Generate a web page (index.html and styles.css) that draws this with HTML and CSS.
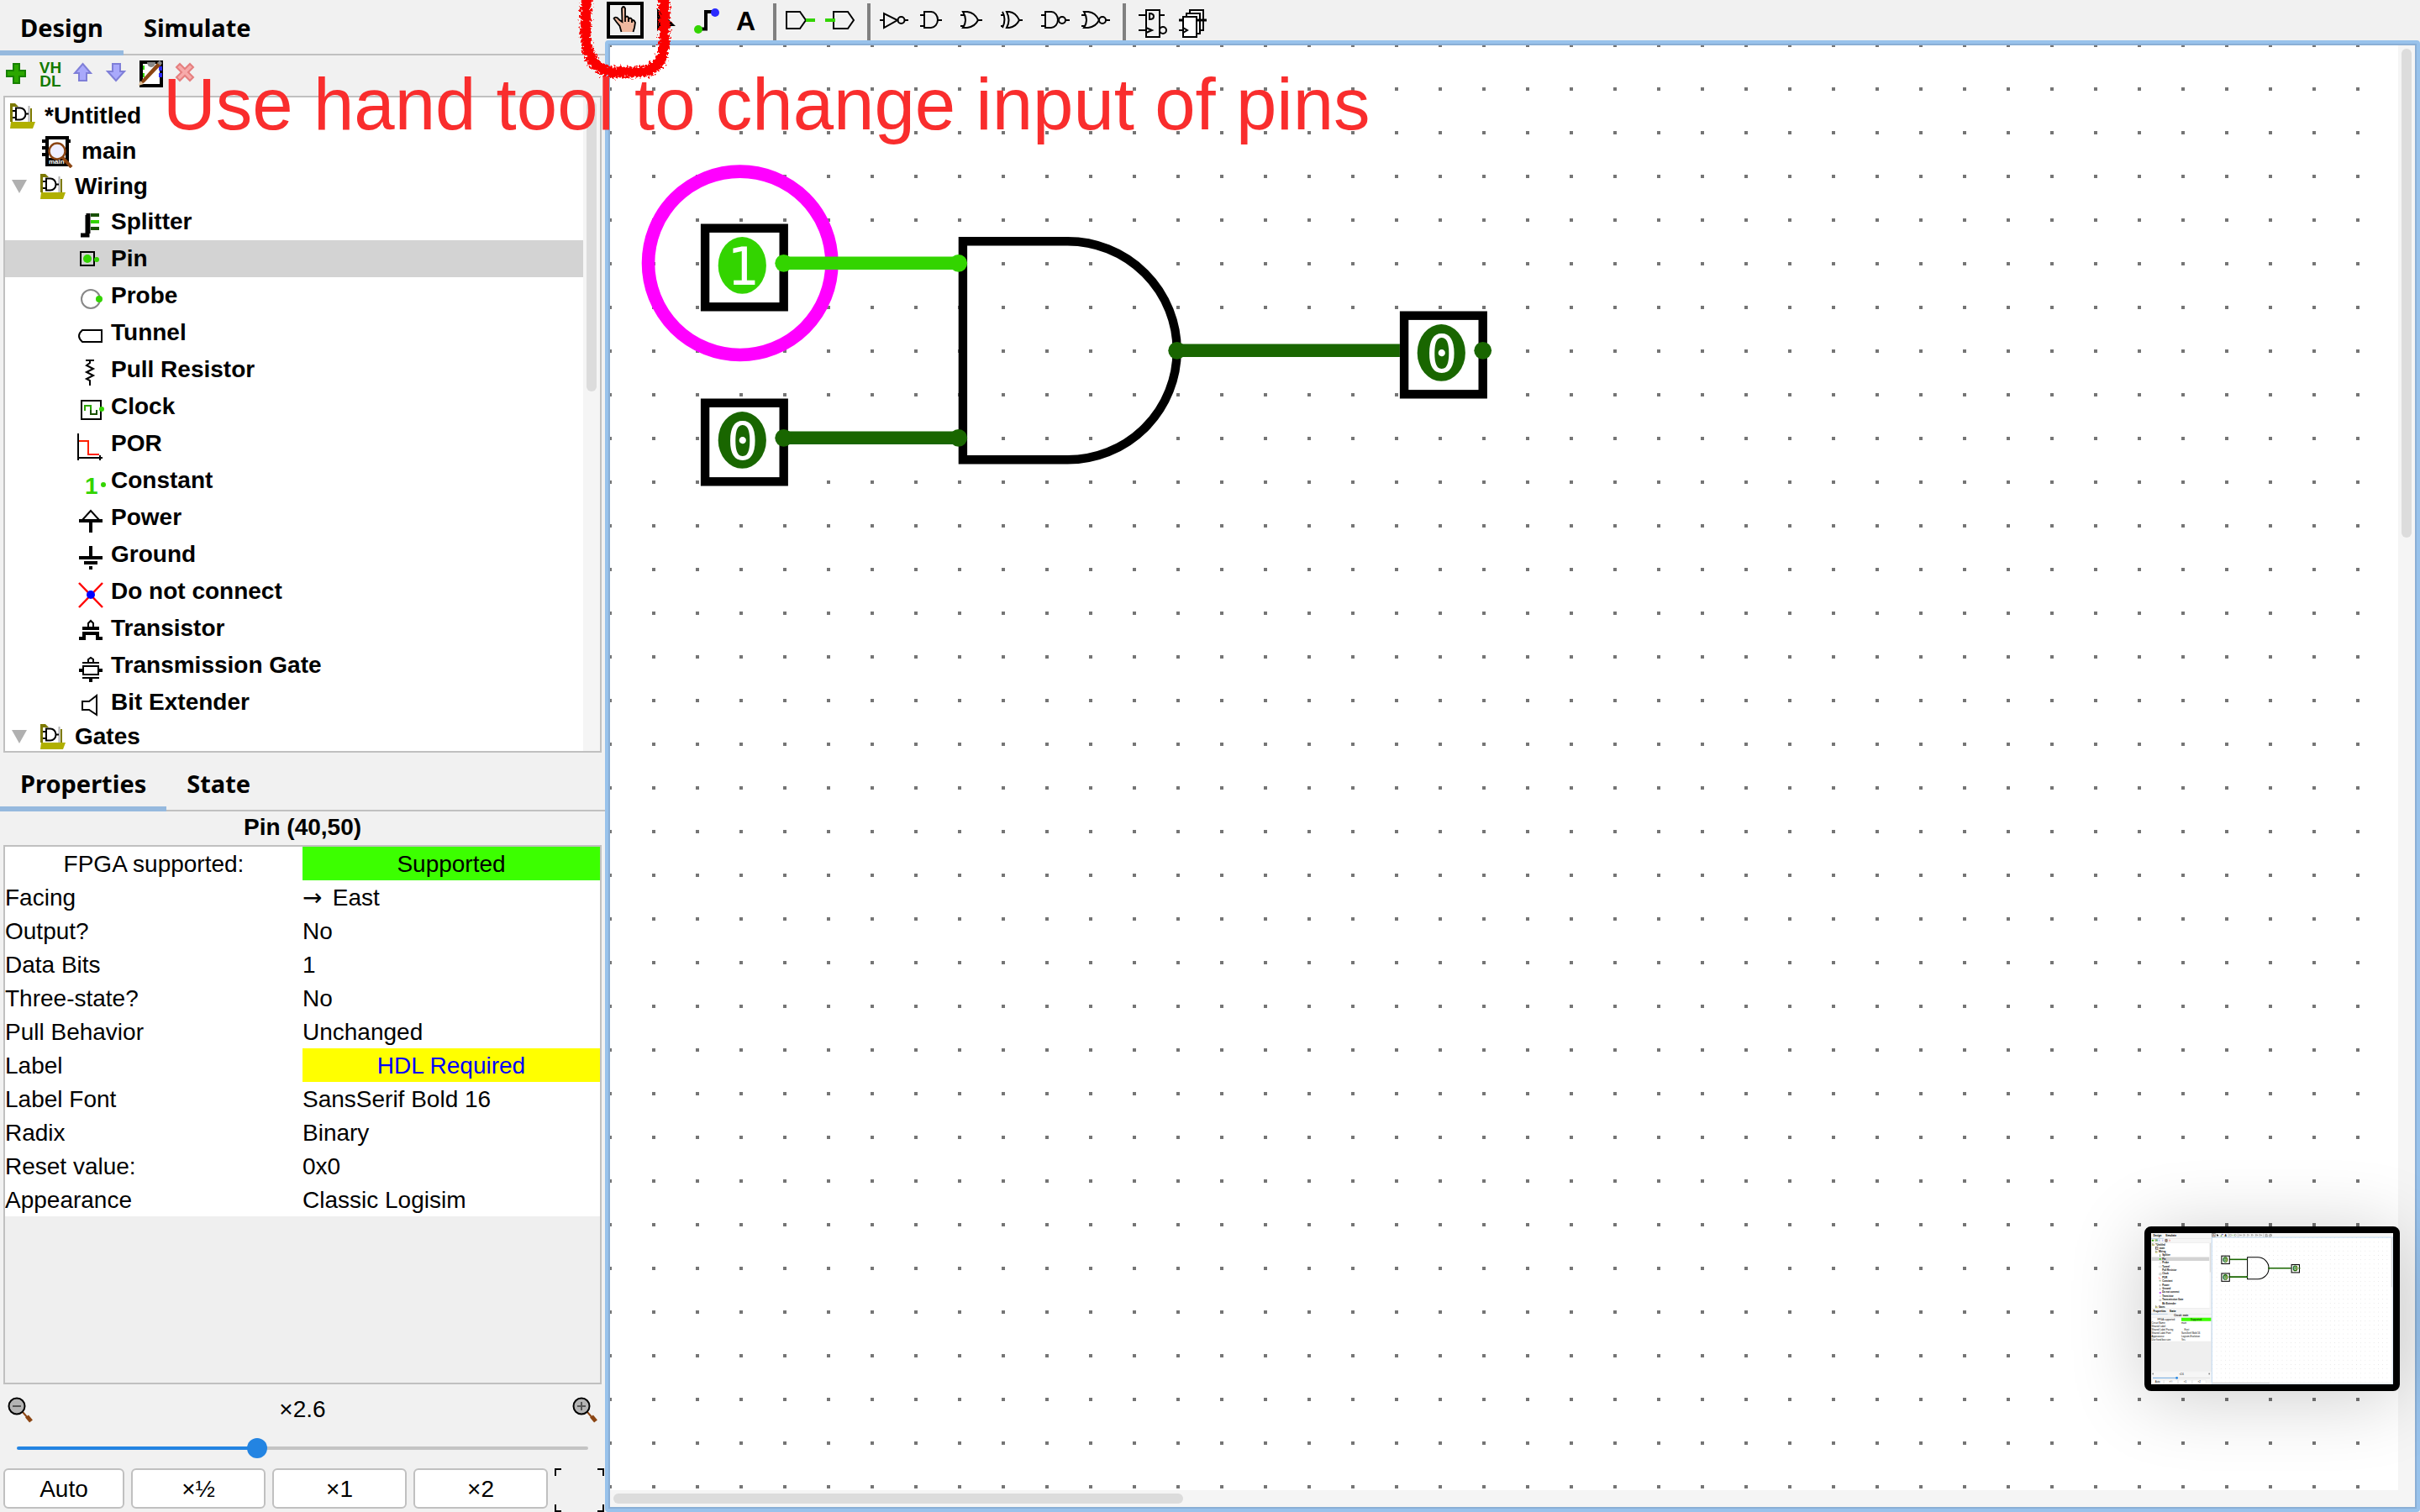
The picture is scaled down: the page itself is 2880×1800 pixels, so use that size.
FILE: index.html
```html
<!DOCTYPE html>
<html lang="en">
<head>
<meta charset="utf-8">
<title>Logisim-evolution: main of Untitled</title>
<link rel="stylesheet" href="styles.css">
</head>
<body>
<svg class="defs" aria-hidden="true">
  <defs>
    <filter id="crayon" x="-20%" y="-20%" width="140%" height="140%">
      <feTurbulence type="fractalNoise" baseFrequency="0.35" numOctaves="2" seed="4" result="n"/>
      <feDisplacementMap in="SourceGraphic" in2="n" scale="11" xChannelSelector="R" yChannelSelector="G"/>
    </filter>
    <symbol id="folder" viewBox="0 0 32 32">
      <path d="M1 1h6l4 4v18H1z" fill="#7d7a00"/>
      <path d="M4 5h18v18H4z" fill="#fff"/>
      <path d="M23.500 4v20" stroke="#b4b4b4" stroke-width="2"/>
      <path d="M26 7v17" stroke="#7d7a00" stroke-width="2"/>
      <path d="M4 10h4M4 18h4M8 6.500h5a6.500 7 0 0 1 0 14H8zM20 13.500h3" fill="none" stroke="#000" stroke-width="2"/>
      <path d="M2 23h29l-3 8H1z" fill="#b0b000"/>
    </symbol>
    <symbol id="chip" viewBox="0 0 40 40">
      <path d="M5 2h28v36H5zM1 6h5v4H1zM1 14h5v4H1zM1 22h5v4H1zM33 6h2v4h-2z" fill="#000"/>
      <path d="M9 6h20v22H9z" fill="#fff"/>
      <path d="M25 27l11 12" stroke="#8b4513" stroke-width="4"/>
      <circle cx="19" cy="20" r="9.500" fill="#efefff" stroke="#8b4513" stroke-width="2.500"/>
      <text x="9" y="35" font-size="8" font-weight="bold" fill="#fff">main</text>
    </symbol>
    <symbol id="t-hand" viewBox="0 0 48 48">
      <path d="M4 4h40v40H4z" fill="#f1f1f1" stroke="#000" stroke-width="4"/>
      <path d="M19.500 38l-2-7-4-5-3-4q1-2 4-1l3 3 3 2-.500-16q2-4 4 0v11q2-3 4 0v2q2-3 4 0v2q1-2 3 0l1 2-1 6-1.500 5z" fill="#efb9a0"/>
      <path d="M19.500 38l-2-7-4-5-3-4q1-2 4-1l3 3 3 2-.500-16q2-4 4 0v11q2-3 4 0v2q2-3 4 0v2q1-2 3 0l1 2-1 6-1.500 5M24 19v7M28 21v5M32 23v4" fill="none" stroke="#000" stroke-width="1.800"/>
    </symbol>
    <symbol id="t-arrow" viewBox="0 0 48 48"><path d="M14 10v27l6-5 4 8 4-2-3-7h11z" fill="#000"/></symbol>
    <symbol id="t-wire" viewBox="0 0 48 48">
      <path d="M15 34.500h9V14h9" fill="none" stroke="#000" stroke-width="4"/>
      <circle cx="15" cy="35" r="5" fill="#33d400"/><circle cx="35" cy="15" r="5" fill="#2a2aff"/>
    </symbol>
    <symbol id="t-text" viewBox="0 0 48 48"><text x="23.500" y="36" text-anchor="middle" font-size="32" font-weight="bold">A</text></symbol>
    <symbol id="t-in" viewBox="0 0 48 48"><path d="M8 14h16l7 10-7 10H8z" class="line"/><path d="M31 24h11" stroke="#33d400" stroke-width="4"/></symbol>
    <symbol id="t-out" viewBox="0 0 48 48"><path d="M16 14h17l7 10-7 10H16z" class="line"/><path d="M6 24h12" stroke="#33d400" stroke-width="4"/></symbol>
    <symbol id="t-not" viewBox="0 0 48 48"><path d="M7 24h5M12 16v17l16-9zM37 24h4" class="line"/><circle cx="32.500" cy="24" r="4" class="line"/></symbol>
    <symbol id="t-and" viewBox="0 0 48 48"><path d="M7 18h5M7 31h5M12 14h8a8 9.500 0 0 1 0 19h-8zM28 24h5" class="line"/></symbol>
    <symbol id="t-or" viewBox="0 0 48 48"><path d="M7 18h5M7 31h5M10 14h5q9 1 13 10-4 8-13 9h-5q6-9 0-19zM28 24h5" class="line"/></symbol>
    <symbol id="t-xor" viewBox="0 0 48 48"><path d="M7 18h3M7 31h3M9 14q5 9 0 19M14 14h3q8 1 12 10-4 8-12 9h-3q5-9 0-19zM29 24h4" class="line"/></symbol>
    <symbol id="t-nand" viewBox="0 0 48 48"><path d="M7 18h5M7 31h5M12 14h7a8 9.500 0 0 1 0 19h-7zM36 24h5" class="line"/><circle cx="32" cy="24" r="4" class="line"/></symbol>
    <symbol id="t-nor" viewBox="0 0 48 48"><path d="M7 18h5M7 31h5M10 14h5q9 1 13 10-4 8-13 9h-5q6-9 0-19zM36 24h5" class="line"/><circle cx="32" cy="24" r="4" class="line"/></symbol>
    <symbol id="t-ff" viewBox="0 0 48 48"><path d="M20 12h16v32H20zM11 18h9M11 36h9M36 18h6M20 33l7 3-7 3M24 16q5 0 5 3.500t-5 3.500z" class="line"/><circle cx="40" cy="36" r="4" class="line"/></symbol>
    <symbol id="t-mem" viewBox="0 0 48 48"><path d="M24 12h16v24H24z" class="line solid"/><path d="M20 16h16v24H20z" class="line solid"/><path d="M16 20h16v24H16zM11 36h5M16 33l5 3-5 3" class="line solid"/><path d="M11 24h5M32 24h12" stroke="#000" stroke-width="3"/></symbol>
    <g id="gate">
      <path d="M105 45H81v50h24a25 25 0 0 0 0-50z" fill="none" stroke="#000" stroke-width="2"/>
    </g>
    <g id="box"><rect x="22" y="42" width="18" height="18" fill="#fff" stroke="#000" stroke-width="2"/></g>
    <g id="low">
      <use href="#box"/>
      <ellipse cx="30.500" cy="50.500" rx="5.500" ry="6.500" fill="#196600"/>
      <text x="30.600" y="54.900" class="bit">0</text>
    </g>
    <g id="lowWires" stroke="#196600" stroke-width="3">
      <path d="M40 90h40M130 70h51"/>
    </g>
    <g id="lowDots" fill="#196600"><circle cx="40" cy="90" r="2"/><circle cx="80" cy="90" r="2"/><circle cx="130" cy="70" r="2"/><circle cx="200" cy="70" r="2"/></g>
    <pattern id="dots" width="52" height="52" patternUnits="userSpaceOnUse" x="724" y="52"><rect width="4" height="4" fill="#757575"/></pattern>
  </defs>
</svg>

<div class="app">
  <aside class="sidebar">
    <nav class="tabs"><button class="tab active">Design</button><button class="tab">Simulate</button></nav>
    <div class="tree-tools">
      <button aria-label="Add circuit"><svg viewBox="0 0 40 48"><path d="M16 10h7v8h7v7h-7v8h-7v-8H8v-7h8z" fill="#2ba700" stroke="#178000" stroke-width="2"/></svg></button>
      <button aria-label="Add VHDL"><svg viewBox="0 0 40 48"><text x="20" y="21" text-anchor="middle" class="vhdl">VH</text><text x="20" y="37" text-anchor="middle" class="vhdl">DL</text></svg></button>
      <button aria-label="Move up"><svg viewBox="0 0 40 48"><path d="M18.500 10l9.500 11h-5v9h-9v-9H9z" fill="#a9a9fb" stroke="#7f7fd8" stroke-width="2"/></svg></button>
      <button aria-label="Move down"><svg viewBox="0 0 40 48"><path d="M18 30l10-11h-5v-9h-9v9H8z" fill="#a9a9fb" stroke="#7f7fd8" stroke-width="2"/></svg></button>
      <button aria-label="Edit appearance"><svg viewBox="0 0 40 48"><path d="M8 8h24v28H8z" fill="#fff" stroke="#000" stroke-width="4"/><path d="M15 8a5 6 0 0 0 10 0" fill="#888"/><path d="M10 12h2v5h-2zM10 21h2v5h-2z" fill="#33d400"/><path d="M29 13h4v5h-4zM29 21h4v5h-4z" fill="#2a2aff"/><path d="M7 35l2-6 19-21 4 3-20 21z" fill="#8b4513"/><path d="M5 36l2-6 4 4z" fill="#e5c49a"/><path d="M27 9l3-3 3 3-2 3z" fill="#888"/></svg></button>
      <button aria-label="Remove circuit"><svg viewBox="0 0 40 48"><path d="M10 14l4-4 6 6 6-6 4 4-6 6 6 6-4 4-6-6-6 6-4-4 6-6z" fill="#f7aaaa" stroke="#e57f7f" stroke-width="2"/></svg></button>
    </div>
    <div class="tree">
      <ul>
        <li class="lib root"><svg class="lib-icon" viewBox="0 0 32 32"><use href="#folder"/></svg>*Untitled</li>
        <li class="lib circuit"><svg class="chip-icon" viewBox="0 0 40 40"><use href="#chip"/></svg>main</li>
        <li class="lib"><svg class="twist" viewBox="0 0 20 16"><path d="M1 0h18l-9 16z" fill="#b0b0b0"/></svg><svg class="lib-icon" viewBox="0 0 32 32"><use href="#folder"/></svg>Wiring</li>
        <li class="leaf"><svg viewBox="0 0 40 44"><path d="M4 38h8V14" fill="none" stroke="#000" stroke-width="5"/><path d="M16 14h10M16 30h10" stroke="#195000" stroke-width="4"/><path d="M16 22h10" stroke="#33d400" stroke-width="4"/><path d="M13 12v24" stroke="#000" stroke-width="5"/></svg>Splitter</li>
        <li class="leaf selected"><svg viewBox="0 0 40 44"><path d="M4 14h16v16H4z" class="line"/><circle cx="12" cy="22" r="5" fill="#33d400"/><circle cx="23" cy="23" r="3" fill="#33d400"/></svg>Pin</li>
        <li class="leaf"><svg viewBox="0 0 40 44"><circle cx="16" cy="26" r="11" fill="#fff" stroke="#888" stroke-width="2"/><circle cx="26" cy="26" r="4" fill="#33d400"/></svg>Probe</li>
        <li class="leaf"><svg viewBox="0 0 40 44"><path d="M6 19h23v14H6q-8-7 0-14z" class="line"/></svg>Tunnel</li>
        <li class="leaf"><svg viewBox="0 0 40 44"><path d="M10 11h10M15 11v3l-4 3 8 4-8 4 8 4-8 4 4 2v6" class="line"/></svg>Pull Resistor</li>
        <li class="leaf"><svg viewBox="0 0 40 44"><path d="M5 15h23v22H5z" class="line"/><path d="M9 27v-6h7v5" fill="none" stroke="#2ba700" stroke-width="2"/><path d="M16 26v5h7v-5" fill="none" stroke="#195000" stroke-width="2"/><circle cx="29" cy="25" r="3" fill="#33d400"/></svg>Clock</li>
        <li class="leaf"><svg viewBox="0 0 40 44"><path d="M1 10v32M1 39h29M27 36v6" class="line"/><path d="M2 19h11v16h13" fill="none" stroke="#ff2000" stroke-width="2"/></svg>POR</li>
        <li class="leaf"><svg viewBox="0 0 40 44"><text x="9" y="38" font-size="28" font-weight="bold" fill="#33d400">1</text><circle cx="31" cy="27" r="3" fill="#33d400"/></svg>Constant</li>
        <li class="leaf"><svg viewBox="0 0 40 44"><path d="M16 14L5 26h22z" class="line"/><path d="M2 26h28M16 26v14" stroke="#000" stroke-width="4"/></svg>Power</li>
        <li class="leaf"><svg viewBox="0 0 40 44"><path d="M16 12v14M2 26h28M8 32h16M14 38h4" stroke="#000" stroke-width="4"/></svg>Ground</li>
        <li class="leaf"><svg viewBox="0 0 40 44"><path d="M2 12l28 29M30 12L2 41" stroke="#f00" stroke-width="2.500"/><circle cx="16" cy="26" r="5" fill="#00f"/></svg>Do not connect</li>
        <li class="leaf"><svg viewBox="0 0 40 44"><path d="M13 20v-4l3-3 3 3v4" class="line"/><path d="M6 22h20M2 34h6v-6h16v6h6" fill="none" stroke="#000" stroke-width="4"/></svg>Transistor</li>
        <li class="leaf"><svg viewBox="0 0 40 44"><path d="M13 18v-3l3-2 3 2v3M6 19h20M7 23h18v10H7zM6 37h20" class="line"/><path d="M2 28h4M26 28h4M16 37v5" stroke="#000" stroke-width="4"/></svg>Transmission Gate</li>
        <li class="leaf"><svg viewBox="0 0 40 44"><path d="M6 21h8l9-7v23l-9-6H6z" class="line"/></svg>Bit Extender</li>
        <li class="lib last"><svg class="twist" viewBox="0 0 20 16"><path d="M1 0h18l-9 16z" fill="#b0b0b0"/></svg><svg class="lib-icon" viewBox="0 0 32 32"><use href="#folder"/></svg>Gates</li>
      </ul>
      <div class="track"><div class="thumb tree-thumb"></div></div>
    </div>
    <nav class="tabs lower"><button class="tab active">Properties</button><button class="tab">State</button></nav>
    <h2 class="title">Pin (40,50)</h2>
    <div class="props">
      <table>
        <tr><th scope="row" class="center">FPGA supported:</th><td class="center ok">Supported</td></tr>
        <tr><th scope="row">Facing</th><td><span class="arrow">→</span> East</td></tr>
        <tr><th scope="row">Output?</th><td>No</td></tr>
        <tr><th scope="row">Data Bits</th><td>1</td></tr>
        <tr><th scope="row">Three-state?</th><td>No</td></tr>
        <tr><th scope="row">Pull Behavior</th><td>Unchanged</td></tr>
        <tr><th scope="row">Label</th><td class="center required">HDL Required</td></tr>
        <tr><th scope="row">Label Font</th><td>SansSerif Bold 16</td></tr>
        <tr><th scope="row">Radix</th><td>Binary</td></tr>
        <tr><th scope="row">Reset value:</th><td>0x0</td></tr>
        <tr><th scope="row">Appearance</th><td>Classic Logisim</td></tr>
      </table>
    </div>
    <div class="zoom">
      <div class="zoom-head">
        <svg viewBox="0 0 32 32" aria-label="Zoom out"><path d="M19 19l6 7" stroke="#8b4513" stroke-width="2"/><path d="M24 24l5 6" stroke="#8b4513" stroke-width="5"/><circle cx="12" cy="12" r="9.500" fill="#b4b4b4" stroke="#000" stroke-width="2"/><path d="M7 12h10" stroke="#555" stroke-width="2"/></svg>
        <label for="zoom">×2.6</label>
        <svg viewBox="0 0 32 32" aria-label="Zoom in"><path d="M19 19l6 7" stroke="#8b4513" stroke-width="2"/><path d="M24 24l5 6" stroke="#8b4513" stroke-width="5"/><circle cx="12" cy="12" r="9.500" fill="#b4b4b4" stroke="#000" stroke-width="2"/><path d="M7 12h10M12 7v10" stroke="#555" stroke-width="2"/></svg>
      </div>
      <input type="range" id="zoom" min="0" max="1000" value="418" style="--fill:42%">
      <div class="zoom-buttons">
        <button>Auto</button><button>×½</button><button>×1</button><button>×2</button>
        <button class="fit" aria-label="Center"><svg viewBox="0 0 60 52"><path d="M1 9V1h7M51 1h7v8M1 43v8h7M51 51h7v-8" fill="none" stroke="#000" stroke-width="2"/></svg></button>
      </div>
    </div>
  </aside>

  <main class="work">
    <div class="toolbar">
      <button aria-label="Poke"><svg><use href="#t-hand"/></svg></button>
      <button aria-label="Select"><svg><use href="#t-arrow"/></svg></button>
      <button aria-label="Wiring"><svg><use href="#t-wire"/></svg></button>
      <button aria-label="Text"><svg><use href="#t-text"/></svg></button>
      <i class="sep"></i>
      <button aria-label="Input pin"><svg><use href="#t-in"/></svg></button>
      <button aria-label="Output pin"><svg><use href="#t-out"/></svg></button>
      <i class="sep"></i>
      <button aria-label="NOT gate"><svg><use href="#t-not"/></svg></button>
      <button aria-label="AND gate"><svg><use href="#t-and"/></svg></button>
      <button aria-label="OR gate"><svg><use href="#t-or"/></svg></button>
      <button aria-label="XOR gate"><svg><use href="#t-xor"/></svg></button>
      <button aria-label="NAND gate"><svg><use href="#t-nand"/></svg></button>
      <button aria-label="NOR gate"><svg><use href="#t-nor"/></svg></button>
      <i class="sep"></i>
      <button aria-label="D flip-flop"><svg><use href="#t-ff"/></svg></button>
      <button aria-label="Register"><svg><use href="#t-mem"/></svg></button>
    </div>
    <div class="frame">
      <div class="frame-inner">
        <div class="canvas">
          <svg class="drawing" viewBox="0 0 1100 560">
            <g transform="translate(-1.300 -.700) scale(5.200)">
              <use href="#gate"/>
              <use href="#low" y="40"/>
              <use href="#box"/>
              <ellipse cx="30.500" cy="50.500" rx="5.500" ry="6.500" fill="#33d400"/>
              <text x="30.600" y="54.900" class="bit">1</text>
              <circle cx="30" cy="50" r="21" fill="none" stroke="#f0f" stroke-width="3"/>
              <use href="#lowWires"/>
              <use href="#low" x="160" y="20"/>
              <path d="M40 50h40" stroke="#33d400" stroke-width="3"/>
              <circle cx="40" cy="50" r="2" fill="#33d400"/><circle cx="80" cy="50" r="2" fill="#33d400"/>
              <use href="#lowDots"/>
            </g>
          </svg>
        </div>
        <div class="track"><div class="thumb canvas-thumb"></div></div>
        <div class="track across"><div class="thumb across-thumb"></div></div>
        <div class="track"></div>
      </div>
    </div>
  </main>

  <svg class="scribble" viewBox="0 0 140 100"><path d="M27-14C25 30 22 50 31 68Q39 86 61 86H85Q110 86 117 64Q121 30 117-14" fill="none" stroke="#fb0500" stroke-width="13" filter="url(#crayon)"/></svg>
  <p class="note">Use hand tool to change input of pins</p>

  <svg class="preview" viewBox="0 0 2880 1800" aria-label="Previous step">
    <path d="M0 0h2880v1800H0z" fill="#f6f6f6"/>
    <g class="pv-tab"><text x="25" y="44">Design</text><text x="172" y="44">Simulate</text><text x="25" y="944">Properties</text><text x="220" y="944">State</text></g>
    <path d="M0 65h720M0 965h720" stroke="#c0c0c0" stroke-width="2"/>
    <path d="M0 63h148M0 963h196" stroke="#96b9de" stroke-width="6"/>
    <path d="M8 87h24M20 76v24" stroke="#2ba700" stroke-width="10"/><text x="44" y="98" font-size="26" font-weight="bold" fill="#178000">VH</text>
    <path d="M98 76v22M138 76v22" stroke="#a9a9fb" stroke-width="10"/><path d="M168 74h24v28h-24z" fill="#b98" stroke="#000" stroke-width="4"/><path d="M212 78l18 18M230 78l-18 18" stroke="#f08080" stroke-width="7"/>
    <path d="M5 115h710v780H5zM5 1007h710v640H5z" fill="#fff" stroke="#c0c0c0" stroke-width="2"/>
    <path d="M6 1288h708v358H6z" fill="#efefef"/><path d="M6 286h688v44H6z" fill="#d3d3d3"/><path d="M694 116h20v778h-20z" fill="#f5f5f5"/><path d="M698 120h12v344h-12z" fill="#dcdcdc"/>
    <use href="#folder" x="11" y="121" width="32" height="32"/><use href="#chip" x="49" y="160" width="40" height="40"/><use href="#folder" x="47" y="205" width="32" height="32"/><use href="#folder" x="47" y="861" width="32" height="32"/>
    <g class="pv-tree"><text x="53" y="147">*Untitled</text><text x="97" y="190">main</text><text x="89" y="232">Wiring</text><text x="132" y="274">Splitter</text><text x="132" y="318">Pin</text><text x="132" y="362">Probe</text><text x="132" y="406">Tunnel</text><text x="132" y="450">Pull Resistor</text><text x="132" y="494">Clock</text><text x="132" y="538">POR</text><text x="132" y="582">Constant</text><text x="132" y="626">Power</text><text x="132" y="670">Ground</text><text x="132" y="714">Do not connect</text><text x="132" y="758">Transistor</text><text x="132" y="802">Transmission Gate</text><text x="132" y="846">Bit Extender</text><text x="89" y="888">Gates</text><text x="272" y="994">Circuit: main</text></g>
    <path d="M106 252v30M96 568h20" stroke="#195000" stroke-width="6"/><path d="M98 300h18v18H98z" fill="#33d400"/><path d="M98 478h22v20H98z" class="line"/><path d="M94 520v24h24" fill="none" stroke="#f44" stroke-width="4"/><path d="M98 700l20 20M118 700l-20 20" stroke="#a0f" stroke-width="7"/><path d="M106 608v26M106 652v26M96 620h22M96 664h22M98 752h20M98 790h20v16H98z" class="line"/><circle cx="108" cy="356" r="10" fill="none" stroke="#888" stroke-width="2"/><path d="M94 392h28v16H94z" fill="none" stroke="#888" stroke-width="2"/>
    <path d="M360 1008h354v40H360z" fill="#3cff00"/>
    <g class="pv-prop"><text x="75" y="1038">FPGA supported:</text><text x="471" y="1038">Supported</text><text x="6" y="1078">Circuit Name</text><text x="360" y="1078">main</text><text x="6" y="1118">Shared Label</text><text x="6" y="1158">Shared Label Facing</text><text x="360" y="1158">→ East</text><text x="6" y="1198">Shared Label Font</text><text x="360" y="1198">SansSerif Bold 16</text><text x="6" y="1238">Appearance</text><text x="360" y="1238">Logisim-Evolution</text><text x="6" y="1278">Use fixed box size</text><text x="360" y="1278">Yes</text><text x="334" y="1688">×2.6</text></g>
    <path d="M20 1724h680" stroke="#c4c4c4" stroke-width="4"/><path d="M20 1724h286" stroke="#2384e2" stroke-width="6"/><circle cx="306" cy="1724" r="14" fill="#2384e2"/>
    <circle cx="22" cy="1675" r="9" fill="#888"/><circle cx="692" cy="1675" r="9" fill="#888"/>
    <path d="M5 1749h142v46H5zM157 1749h158v46H157zM325 1749h158v46H325zM493 1749h158v46H493z" fill="#fff" stroke="#c0c0c0" stroke-width="2"/>
    <g class="pv-prop"><text x="48" y="1782">Auto</text><text x="216" y="1782">×½</text><text x="388" y="1782">×1</text><text x="556" y="1782">×2</text></g>
    <path d="M723 51h2154v1746H723z" fill="#fff" stroke="#98c2eb" stroke-width="6"/>
    <path d="M726 54h2128v1720H726z" fill="url(#dots)"/><path d="M2854 54h20v1740h-20zM726 1774h2128v20H726z" fill="#f5f5f5"/><path d="M2858 58h12v584h-12zM730 1778h681v12H730z" fill="#dcdcdc"/>
    <use href="#t-hand" x="720" width="48" height="48"/><use href="#t-arrow" x="768" width="48" height="48"/><use href="#t-wire" x="816" width="48" height="48"/><use href="#t-text" x="864" width="48" height="48"/><use href="#t-in" x="928" width="48" height="48"/><use href="#t-out" x="976" width="48" height="48"/><use href="#t-not" x="1040" width="48" height="48"/><use href="#t-and" x="1088" width="48" height="48"/><use href="#t-or" x="1136" width="48" height="48"/><use href="#t-xor" x="1184" width="48" height="48"/><use href="#t-nand" x="1232" width="48" height="48"/><use href="#t-nor" x="1280" width="48" height="48"/><use href="#t-ff" x="1344" width="48" height="48"/><use href="#t-mem" x="1392" width="48" height="48"/>
    <path d="M922 4v44M1034 4v44M1338 4v44" stroke="#808080" stroke-width="4"/>
    <g transform="translate(724.700 53.300) scale(5.200)"><use href="#gate"/><use href="#lowWires"/><path d="M40 50h40" stroke="#196600" stroke-width="3"/><use href="#low"/><use href="#low" y="40"/><use href="#low" x="160" y="20"/><use href="#lowDots"/></g>
  </svg>
</div>
</body>
</html>
```
FILE: styles.css
```css
* { box-sizing: border-box; }
body {
  margin: 0;
  background: #f1f1f1;
  color: #000;
  font: 28px/40px "Liberation Sans", Arial, sans-serif;
}
button { margin: 0; padding: 0; border: 0; background: none; color: inherit; font: inherit; }
svg { display: block; }
.defs { position: absolute; width: 0; height: 0; }
.line { fill: none; stroke: #000; stroke-width: 2; }
.solid { fill: #fff; }
.bit { fill: #fff; font-family: "DejaVu Sans Mono", monospace; font-size: 12px; text-anchor: middle; }

.app { position: relative; display: grid; grid-template-columns: 720px 1fr; height: 100vh; overflow: hidden; }
.sidebar { display: flex; flex-direction: column; min-height: 0; }

.tabs { display: flex; flex: none; height: 66px; border-bottom: 2px solid #c0c0c0; }
.tabs.lower { margin-top: 4px; }
.tab { height: 66px; padding: 6px 24px 0; border-bottom: 6px solid transparent; font: bold 29px/54px "Noto Sans", "Open Sans", sans-serif; }
.tab.active { border-color: #96b9de; }

.tree-tools { display: flex; flex: none; height: 48px; }
.tree-tools svg { width: 40px; height: 48px; }
.vhdl { fill: #147a00; font-size: 19px; font-weight: bold; }

.tree { display: grid; grid-template-columns: 1fr 20px; flex: 782 1 0; min-height: 0; margin: 0 4px; border: 2px solid #c0c0c0; background: #fff; overflow: hidden; }
.tree ul { margin: 0; padding: 0; list-style: none; font-weight: bold; min-height: 0; overflow: hidden; }
.tree li { display: flex; align-items: center; }
.lib { height: 42px; padding: 2px 0 0 7px; }
.root { padding-left: 5px; }
.circuit { padding-left: 43px; }
.last { height: 36px; }
.lib-icon { width: 32px; height: 32px; margin-right: 10px; }
.chip-icon { width: 40px; height: 40px; margin-right: 8px; }
.twist { width: 20px; height: 16px; margin-right: 14px; }
.leaf { height: 44px; padding-left: 86px; line-height: 42px; }
.leaf svg { width: 40px; height: 44px; }
.selected { background: #d3d3d3; }

.track { padding: 4px; background: #f5f5f5; }
.thumb { width: 12px; border-radius: 6px; background: #dcdcdc; }
.tree-thumb { height: 45%; }
.canvas-thumb { height: 34%; }
.thumb.across-thumb { width: 32%; height: 12px; }

.title { flex: none; margin: 0; height: 40px; font-size: 28px; line-height: 38px; text-align: center; }
.props { flex: 642 1 0; min-height: 0; margin: 0 4px; border: 2px solid #c0c0c0; background: #efefef; overflow: hidden; }
.props table { width: 100%; table-layout: fixed; border-collapse: collapse; background: #fff; line-height: 38px; }
.props th, .props td { height: 40px; padding: 2px 0 0; font-weight: normal; text-align: left; }
.props .center { text-align: center; }
.props .ok { background: #3cff00; }
.props .required { background: #ff0; color: #00f; }
.arrow { display: inline-block; width: 28px; height: 38px; font-family: "DejaVu Sans", sans-serif; vertical-align: top; }

.zoom { flex: none; padding-bottom: 4px; }
.zoom-head { display: flex; align-items: center; justify-content: space-between; height: 60px; padding: 0 8px; }
.zoom-head svg { width: 32px; height: 32px; }
#zoom { display: block; width: 680px; height: 32px; margin: 0 20px 8px; background: none; appearance: none; }
#zoom::-webkit-slider-runnable-track { height: 4px; border-radius: 2px; background: linear-gradient(to right, #2384e2 var(--fill), #c4c4c4 var(--fill)); }
#zoom::-webkit-slider-thumb { width: 24px; height: 24px; margin-top: -10px; border-radius: 50%; background: #2384e2; appearance: none; }
.zoom-buttons { display: grid; grid-template-columns: 144px repeat(3, 160px) 1fr; gap: 8px; padding-left: 4px; }
.zoom-buttons button { height: 48px; padding-top: 2px; border: 2px solid #c0c0c0; border-radius: 6px; background: #fff; }
.zoom-buttons .fit { padding: 0; border: 0; background: none; }
.fit svg { width: 60px; height: 52px; }

.work { display: flex; flex-direction: column; min-width: 0; }
.toolbar { display: flex; flex: none; height: 48px; }
.toolbar svg { width: 48px; height: 48px; }
.sep { width: 4px; margin: 4px 4px 0 8px; background: #808080; }
.frame { flex: 1; min-height: 0; border: 4px solid #98c2eb; border-radius: 4px; background: #98c2eb; }
.frame-inner { display: grid; grid-template: 1fr 20px / 1fr 20px; height: 100%; border: 2px solid #8aafd6; background: #fff; }
.canvas { min-width: 0; min-height: 0; overflow: hidden; background: conic-gradient(from 270deg at 4px 4px, #757575 90deg, transparent 0) -2px -2px / 52px 52px; }
.drawing { width: 1100px; height: 560px; }

.scribble { position: absolute; left: 672px; top: 0; width: 140px; height: 100px; }
.note { position: absolute; left: 194px; top: 74px; margin: 0; color: #f92d2d; font-size: 87px; line-height: 100px; white-space: nowrap; }
.preview { position: absolute; right: 24px; bottom: 144px; width: 304px; height: 196px; border: 8px solid #000; border-radius: 8px; background: #000; box-shadow: 0 8px 90px rgba(0, 0, 0, .2); }
.pv-tab { font: bold 29px "Noto Sans", sans-serif; }
.pv-tree { font-weight: bold; }
```
